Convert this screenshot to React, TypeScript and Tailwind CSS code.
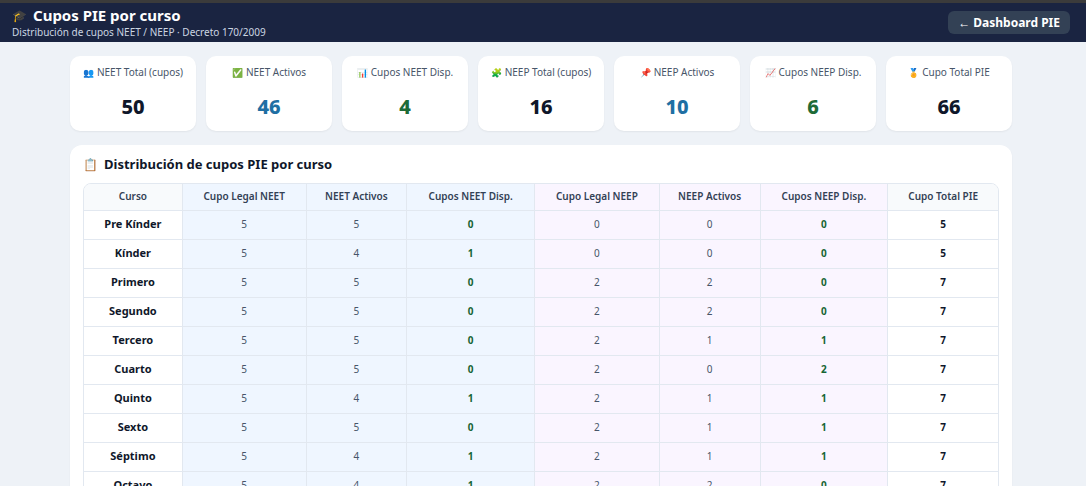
import React from "react";

const cards = [
  { i: "👥", l: "NEET Total (cupos)", v: "50", c: "text-[#0f172a]" },
  { i: "✅", l: "NEET Activos", v: "46", c: "text-[#1f6fa3]" },
  { i: "📊", l: "Cupos NEET Disp.", v: "4", c: "text-[#1e6b37]" },
  { i: "🧩", l: "NEEP Total (cupos)", v: "16", c: "text-[#0f172a]" },
  { i: "📌", l: "NEEP Activos", v: "10", c: "text-[#1f6fa3]" },
  { i: "📈", l: "Cupos NEEP Disp.", v: "6", c: "text-[#1e6b37]" },
  { i: "🏅", l: "Cupo Total PIE", v: "66", c: "text-[#0f172a]" },
];

const rows: [string, number, number, number, number, number, number, number][] = [
  ["Pre Kínder", 5, 5, 0, 0, 0, 0, 5],
  ["Kínder", 5, 4, 1, 0, 0, 0, 5],
  ["Primero", 5, 5, 0, 2, 2, 0, 7],
  ["Segundo", 5, 5, 0, 2, 2, 0, 7],
  ["Tercero", 5, 5, 0, 2, 1, 1, 7],
  ["Cuarto", 5, 5, 0, 2, 0, 2, 7],
  ["Quinto", 5, 4, 1, 2, 1, 1, 7],
  ["Sexto", 5, 5, 0, 2, 1, 1, 7],
  ["Séptimo", 5, 4, 1, 2, 1, 1, 7],
  ["Octavo", 5, 4, 1, 2, 2, 0, 7],
];

const widths = ["w-[99px]", "w-[124px]", "w-[101px]", "w-[128px]", "w-[125px]", "w-[101px]", "w-[128px]", "w-[110px]"];
const heads = ["Curso", "Cupo Legal NEET", "NEET Activos", "Cupos NEET Disp.", "Cupo Legal NEEP", "NEEP Activos", "Cupos NEEP Disp.", "Cupo Total PIE"];
const bgs = ["bg-white", "bg-[#eff6ff]", "bg-[#eff6ff]", "bg-[#eff6ff]", "bg-[#faf5ff]", "bg-[#faf5ff]", "bg-[#faf5ff]", "bg-white"];
const hbgs = ["bg-[#f8fafc]", "bg-[#eff6ff]", "bg-[#eff6ff]", "bg-[#eff6ff]", "bg-[#faf5ff]", "bg-[#faf5ff]", "bg-[#faf5ff]", "bg-[#f8fafc]"];

export default function App() {
  return (
    <div className="w-[1086px] h-[486px] overflow-hidden bg-[#eef2f7]" style={{ fontFamily: '"Noto Sans", "Open Sans", sans-serif' }}>
      <div className="h-[3px] bg-[#3b3b3b]" />
      <div className="h-[39px] bg-[#1a2441] flex items-center justify-between pl-[12px] pr-[16px]">
        <div className="flex flex-col leading-none">
          <div className="flex items-center gap-[6px] text-white font-bold text-[15px]">
            <span className="text-[12px]">🎓</span>Cupos PIE por curso
          </div>
          <div className="text-[#cbd5e1] text-[10px] mt-[4px]">Distribución de cupos NEET / NEEP · Decreto 170/2009</div>
        </div>
        <div className="bg-[#334155] text-white text-[12px] font-bold rounded-[6px] px-[10px] h-[23px] flex items-center">← Dashboard PIE</div>
      </div>
      <div className="w-[942px] ml-[70px] mt-[14px]">
        <div className="flex gap-[10px]">
          {cards.map((c) => (
            <div key={c.l} className="w-[126px] h-[75px] bg-white rounded-[10px] shadow-[0_1px_2px_rgba(0,0,0,0.06)] flex flex-col items-center pt-[9px]">
              <div className="text-[10px] text-[#475569] flex items-center gap-[3px]"><span className="text-[9px]">{c.i}</span>{c.l}</div>
              <div className={`text-[20px] font-extrabold mt-[12px] ${c.c}`}>{c.v}</div>
            </div>
          ))}
        </div>
        <div className="bg-white rounded-[12px] mt-[14px] px-[13px] pt-[10px] h-[360px] shadow-[0_1px_2px_rgba(0,0,0,0.06)]">
          <div className="flex items-center gap-[6px] font-bold text-[13px] text-[#0f172a]"><span className="text-[12px]">📋</span>Distribución de cupos PIE por curso</div>
          <div className="mt-[8px] border border-[#e2e8f0] rounded-[8px] overflow-hidden w-[916px]">
            <div className="flex h-[27px] border-b border-[#e2e8f0]">
              {heads.map((h, i) => (
                <div key={h} className={`${widths[i]} ${hbgs[i]} flex items-center justify-center text-[10px] font-semibold text-[#334155] border-r border-[#e2e8f0] last:border-r-0`}>{h}</div>
              ))}
            </div>
            {rows.map((r) => (
              <div key={r[0]} className="flex h-[29px] border-b border-[#e2e8f0]">
                {r.map((v, i) => {
                  const bold = i === 0 || i === 3 || i === 6 || i === 7;
                  const color = i === 3 || i === 6 ? "text-[#166534]" : i === 0 || i === 7 ? "text-[#0f172a]" : "text-[#475569]";
                  return (
                    <div key={i} className={`${widths[i]} ${bgs[i]} flex items-center justify-center ${i === 0 ? "text-[11px]" : "text-[10px]"} ${bold ? "font-bold" : ""} ${color} border-r border-[#e2e8f0] last:border-r-0`}>{v}</div>
                  );
                })}
              </div>
            ))}
          </div>
        </div>
      </div>
    </div>
  );
}
